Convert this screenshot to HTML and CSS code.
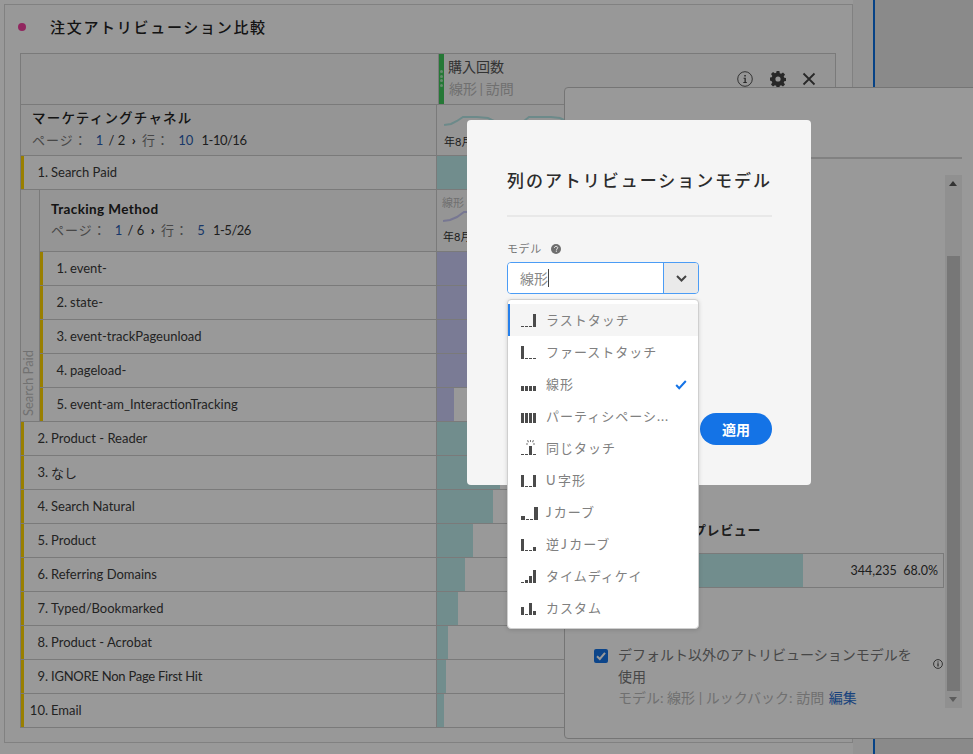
FILE: index.html
```html
<!DOCTYPE html>
<html lang="ja">
	<head>
		<title>注文アトリビューション比較</title>
		<meta charset="utf-8">
		<link rel="stylesheet" href="styles.css">
	</head>
	<body>
		<div class="page">
			<div class="panel">
				<div class="panel-title"><span class="dot"></span><h1>注文アトリビューション比較</h1></div>
				<div class="table">
					<div class="head-row">
						<div class="label-cell"></div>
						<div class="metric-head">
							<div class="grip"><i></i><i></i><i></i><i></i></div>
							<div class="metric-name">
								<div>購入回数</div>
								<div class="muted metric-sub">線形 | 訪問</div>
							</div>
							<div class="tools">
								<svg width="16" height="16" viewBox="0 0 16 16"><circle cx="8" cy="8" r="7.3" fill="none" stroke="#555" stroke-width="1"/><path d="M6.6 6.8h2.2v4.2h1v.9H6.3V11h1.2V7.7h-.9zM7.3 3.9h1.5v1.6H7.3z" fill="#444"/></svg>
								<svg width="16" height="16" viewBox="0 0 16 16"><path fill="#444" fill-rule="evenodd" d="M6.6 0h2.8l.4 2.2 1.3.6 1.9-1.3 2 2-1.3 1.9.6 1.3 2.2.4v2.8l-2.2.4-.6 1.3 1.3 1.9-2 2-1.9-1.3-1.3.6-.4 2.2H6.6l-.4-2.2-1.3-.6-1.9 1.3-2-2 1.3-1.9-.6-1.3L-.5 9.4V6.6l2.2-.4.6-1.3L1 3l2-2 1.9 1.3 1.3-.6zM8 5.4a2.6 2.6 0 1 0 0 5.2 2.6 2.6 0 0 0 0-5.2z"/></svg>
								<svg width="14" height="14" viewBox="0 0 14 14"><path d="M1.5 1.5l11 11M12.5 1.5l-11 11" stroke="#444" stroke-width="1.8" fill="none"/></svg>
							</div>
						</div>
					</div>

					<div class="dim-row">
						<div class="label-cell dim-label">
							<h2>マーケティングチャネル</h2>
							<div class="pager"><span class="muted">ページ：</span><b>1</b> / 2 <span class="chev">›</span> <span class="muted">行：</span><b>10</b> <span class="range">1-10/16</span></div>
						</div>
						<div class="spark-cell">
							<svg class="spark" width="125" height="16" viewBox="0 0 125 16"><path d="M0 9l7-1 6-3 6-4h14l11 1 8 4M80 5l5-4h22l9 1 8 4" fill="none" stroke="#b5e6e6" stroke-width="2"/></svg>
							<div class="spark-date">年8月</div>
						</div>
					</div>

					<div class="row gold">
						<div class="label-cell"><span class="num">1.</span>Search Paid</div>
						<div class="bar-cell"><div class="bar teal bar-full"></div></div>
					</div>

					<div class="nested">
						<div class="nested-side"><span>Search Paid</span></div>
						<div class="nested-main">
							<div class="dim-row nested-head">
								<div class="label-cell dim-label">
									<h2 class="latin">Tracking Method</h2>
									<div class="pager"><span class="muted">ページ：</span><b>1</b> / 6 <span class="chev">›</span> <span class="muted">行：</span><b>5</b> <span class="range">1-5/26</span></div>
								</div>
								<div class="spark-cell nested-spark">
									<div class="muted small">線形</div>
									<svg class="spark" width="125" height="12" viewBox="0 0 125 12"><path d="M0 10l7-1 7-3 7-5h10" fill="none" stroke="#c6c6f4" stroke-width="2"/></svg>
									<div class="spark-date">年8月</div>
								</div>
							</div>
							<div class="row gold"><div class="label-cell"><span class="num">1.</span>event-</div><div class="bar-cell"><div class="bar purple bar-full"></div></div></div>
							<div class="row gold"><div class="label-cell"><span class="num">2.</span>state-</div><div class="bar-cell"><div class="bar purple bar-full"></div></div></div>
							<div class="row gold"><div class="label-cell"><span class="num">3.</span>event-trackPageunload</div><div class="bar-cell"><div class="bar purple bar-full"></div></div></div>
							<div class="row gold"><div class="label-cell"><span class="num">4.</span>pageload-</div><div class="bar-cell"><div class="bar purple bar-full"></div></div></div>
							<div class="row gold"><div class="label-cell"><span class="num">5.</span>event-am_InteractionTracking</div><div class="bar-cell"><div class="bar purple" style="width:17px"></div></div></div>
						</div>
					</div>

					<div class="row gold"><div class="label-cell"><span class="num">2.</span>Product - Reader</div><div class="bar-cell"><div class="bar teal" style="width:100px"></div></div></div>
					<div class="row gold"><div class="label-cell"><span class="num">3.</span>なし</div><div class="bar-cell"><div class="bar teal" style="width:63px"></div></div></div>
					<div class="row gold"><div class="label-cell"><span class="num">4.</span>Search Natural</div><div class="bar-cell"><div class="bar teal" style="width:56px"></div></div></div>
					<div class="row gold"><div class="label-cell"><span class="num">5.</span>Product</div><div class="bar-cell"><div class="bar teal" style="width:36px"></div></div></div>
					<div class="row gold"><div class="label-cell"><span class="num">6.</span>Referring Domains</div><div class="bar-cell"><div class="bar teal" style="width:28px"></div></div></div>
					<div class="row gold"><div class="label-cell"><span class="num">7.</span>Typed/Bookmarked</div><div class="bar-cell"><div class="bar teal" style="width:21px"></div></div></div>
					<div class="row gold"><div class="label-cell"><span class="num">8.</span>Product - Acrobat</div><div class="bar-cell"><div class="bar teal" style="width:11px"></div></div></div>
					<div class="row gold"><div class="label-cell"><span class="num">9.</span><span class="tight">IGNORE Non Page First Hit</span></div><div class="bar-cell"><div class="bar teal" style="width:9px"></div></div></div>
					<div class="row gold"><div class="label-cell"><span class="num">10.</span>Email</div><div class="bar-cell"><div class="bar teal" style="width:7px"></div></div></div>
				</div>
			</div>
			<div class="gutter"></div>
			<div class="rail"></div>

			<div class="side-panel">
				<div class="side-rule"></div>
				<div class="scrollbar">
					<span class="arrow-up"></span>
					<span class="thumb"></span>
					<span class="arrow-down"></span>
				</div>
				<div class="side-body">
					<h3>プレビュー</h3>
					<div class="preview">
						<div class="preview-fill"></div>
						<div class="preview-val">344,235&nbsp; 68.0%</div>
					</div>
					<div class="check-row">
						<span class="checkbox"><svg width="10" height="10" viewBox="0 0 10 10"><path d="M1 5.2l2.8 2.8L9 1.8" fill="none" stroke="#fff" stroke-width="2"/></svg></span>
						<div class="check-text">
							<div>デフォルト以外のアトリビューションモデルを使用</div>
							<div class="meta">モデル: 線形 | ルックバック: 訪問 <a>編集</a></div>
						</div>
						<svg class="check-info" width="10" height="10" viewBox="0 0 10 10"><circle cx="5" cy="5" r="4.4" fill="none" stroke="#444" stroke-width=".9"/><path d="M4.4 4.2h1.2v3.2H4.4zM4.4 2.4h1.2v1.1H4.4z" fill="#444"/></svg>
					</div>
				</div>
			</div>

			<div class="dim"></div>

			<div class="modal">
				<h2 class="modal-title">列のアトリビューションモデル</h2>
				<div class="modal-rule"></div>
				<div class="field-label">モデル <svg width="10" height="10" viewBox="0 0 10 10"><circle cx="5" cy="5" r="5" fill="#6e6e6e"/><path d="M3.4 3.9C3.5 2.9 4.2 2.4 5.1 2.4c1 0 1.6.6 1.6 1.3 0 1.1-1.2 1.1-1.2 2.1" fill="none" stroke="#f5f5f5" stroke-width="1"/><rect x="4.8" y="6.6" width="1.1" height="1.1" fill="#f5f5f5"/></svg></div>
				<div class="combo">
					<div class="combo-input">線形<span class="caret"></span></div>
					<div class="combo-btn"><svg width="11" height="7" viewBox="0 0 11 7"><path d="M1 1l4.5 4.5L10 1" fill="none" stroke="#444" stroke-width="2"/></svg></div>
					<ul class="menu">
						<li class="active"><svg class="model" viewBox="0 0 15 14"><path d="M0 12h3v1H0zM4 12h3v1H4zM8 12h3v1H8zM12 0h3v13h-3z"/></svg>ラストタッチ</li>
						<li><svg class="model" viewBox="0 0 15 14"><path d="M0 0h3v13H0zM4 12h3v1H4zM8 12h3v1H8zM12 12h3v1h-3z"/></svg>ファーストタッチ</li>
						<li><svg class="model" viewBox="0 0 15 14"><path d="M0 8h3v5H0zM4 8h3v5H4zM8 8h3v5H8zM12 8h3v5h-3z"/></svg>線形<svg class="tick" width="12" height="10" viewBox="0 0 12 10"><path d="M1.2 5l3 3.2L10.8 1" fill="none" stroke="#1473e6" stroke-width="2"/></svg></li>
						<li><svg class="model" viewBox="0 0 15 14"><path d="M0 3h3v10H0zM4 3h3v10H4zM8 3h3v10H8zM12 3h3v10h-3z"/></svg>パーティシペーシ...</li>
						<li><svg class="model" viewBox="0 0 15 14"><path d="M0 12h3v1H0zM4 12h3v1H4zM8 4h3v9H8zM12 12h3v1h-3z"/><path d="M9 -2h1v2H9zM6 -1.500l1 -.5 1 2-1 .5zM13 -1.500l-1 -.5-1 2 1 .5zM5 1.500h2v1H5zM12 1.500h2v1h-2z" fill="#777"/></svg>同じタッチ</li>
						<li><svg class="model" viewBox="0 0 15 14"><path d="M0 1h3v12H0zM4 12h3v1H4zM8 12h3v1H8zM12 1h3v12h-3z"/></svg>U 字形</li>
						<li><svg class="model j" viewBox="0 0 17 14"><path d="M0 9h4v4H0zM5 12h3v1H5zM9 12h3v1H9zM13 0h4v13h-4z"/></svg>J カーブ</li>
						<li><svg class="model" viewBox="0 0 15 14"><path d="M0 1h3v12H0zM4 12h3v1H4zM8 12h3v1H8zM12 9h3v4h-3z"/></svg>逆 J カーブ</li>
						<li><svg class="model" viewBox="0 0 15 14"><path d="M0 12h3v1H0zM4 10h3v3H4zM8 6h3v7H8zM12 0h3v13h-3z"/></svg>タイムディケイ</li>
						<li><svg class="model" viewBox="0 0 15 14"><path d="M0 5h3v8H0zM4 12h3v1H4zM8 1h3v12H8zM12 9h3v4h-3z"/></svg>カスタム</li>
					</ul>
				</div>
				<div class="modal-foot"><button class="apply">適用</button></div>
			</div>
		</div>
	</body>
</html>
```
FILE: styles.css
```css
* {
	box-sizing: border-box;
}

body {
	margin: 0px;
	font-family: "Lato", "Noto Sans CJK JP", sans-serif;
	font-size: 14px;
	color: #333;
	background-color: #fff;
}

h1, h2, h3, ul {
	margin: 0;
	padding: 0;
}

.page {
	position: relative;
	width: 973px;
	height: 754px;
	overflow: hidden;
	display: flex;
	background-color: #fff;
	padding: 4px 0 11px 4px;
}

.muted {
	color: #bbb;
}

.small {
	font-size: 11px;
	line-height: 14px;
}

/* report panel */
.panel {
	width: 849px;
	flex: none;
	border: 1px solid #d8d8d8;
	background-color: #fdfdfd;
	padding: 0 16px 0 15px;
}

.panel-title {
	height: 48px;
	display: flex;
	align-items: center;
	padding-bottom: 6px;
}

.dot {
	width: 8px;
	height: 8px;
	margin: 2px 0 0 -2px;
	border-radius: 50%;
	background-color: #f2409f;
}

.panel-title h1 {
	margin-left: 24px;
	font-size: 15px;
	font-weight: 500;
	letter-spacing: 1.700px;
	color: #222;
}

.table {
	border: 1px solid #ccc;
	border-bottom: 0;
	width: 816px;
}

.head-row, .dim-row, .row {
	display: flex;
	border-bottom: 1px solid #ccc;
}

.label-cell {
	flex: none;
	width: 416px;
}

.head-row {
	height: 51px;
	background-color: #f8f8f8;
}

.metric-head {
	flex: 1;
	display: flex;
	position: relative;
	margin-left: 1px;
	border-left: 1px solid #ccc;
}

.grip {
	width: 5px;
	background-color: #3fc85a;
	display: flex;
	flex-direction: column;
	align-items: center;
	gap: 1.500px;
	padding-top: 16px;
}

.grip i {
	width: 3px;
	height: 3px;
	border-radius: 50%;
	background-color: #a8e8b4;
}

.metric-name {
	padding: 2px 0 0 4px;
	line-height: 22px;
	font-size: 14px;
	color: #555;
}

.metric-sub {
	padding-left: 1px;
	word-spacing: -1px;
	color: #bbb;
}

.tools {
	position: absolute;
	right: 19px;
	top: 17px;
	display: flex;
	align-items: center;
	gap: 16.500px;
}

.dim-row {
	height: 51px;
	background-color: #f8f8f8;
}

.dim-label {
	padding: 3px 0 0 11px;
	border-right: 1px solid #ccc;
}

.dim-label h2 {
	font-size: 13.500px;
	font-weight: 500;
	letter-spacing: 1.2px;
	line-height: 20px;
	color: #222;
}

.dim-label h2.latin {
	letter-spacing: .4px;
	font-weight: 700;
}

.pager {
	font-size: 13px;
	line-height: 22px;
	padding-top: 1px;
	white-space: nowrap;
}

.nested-head .pager {
	padding-top: 0;
}

.pager b {
	font-weight: 400;
	color: #2a5db0;
	margin: 0 2px 0 8px;
}

.pager .muted {
	letter-spacing: 1px;
	color: #777;
}

.chev {
	font-size: 14px;
	font-weight: 700;
	margin: 0 3px;
}

.range {
	margin-left: 3px;
	letter-spacing: -.5px;
}

.spark-cell {
	padding: 11px 0 0 7px;
	font-size: 11px;
}

.spark {
	display: block;
}

.spark-date {
	margin-top: 2px;
	line-height: 16px;
	color: #333;
}

.row {
	height: 34px;
	background-color: #fff;
}

.row .label-cell {
	display: flex;
	align-items: center;
	border-left: 3px solid #ffd400;
	border-right: 1px solid #ccc;
	font-size: 13px;
	padding-bottom: 1px;
	color: #3a3a3a;
}

.num {
	width: 24px;
	margin-right: 3px;
	text-align: right;
}

.tight {
	letter-spacing: -.25px;
}

.bar-cell {
	flex: 1;
	min-width: 0;
}

.bar {
	height: 100%;
}

.bar-full {
	width: 100%;
}

.teal {
	background-color: #bcecec;
}

.purple {
	background-color: #cccdf8;
}

/* breakdown inside row 1 */
.nested {
	display: flex;
	border-bottom: 2px solid #ccc;
	margin-bottom: -1px;
}

.nested-side {
	width: 19px;
	flex: none;
	background-color: #f8f8f8;
	border-right: 1px solid #ccc;
	display: flex;
	align-items: flex-end;
	justify-content: center;
	padding: 0 4px 5px 0;
}

.nested-side span {
	writing-mode: vertical-rl;
	transform: rotate(180deg);
	font-size: 13px;
	color: #bdbdbd;
	line-height: 16px;
}

.nested-main {
	flex: 1;
	min-width: 0;
}

.nested-main .row:last-child {
	border-bottom: 0;
	height: 33px;
}

.nested-head {
	height: 62px;
}

.nested-head .dim-label {
	width: 397px;
	padding: 9px 0 0 11px;
}

.nested-main .row .label-cell {
	width: 397px;
}

.nested-spark {
	padding: 6px 0 0 6px;
}

.nested-spark .small {
	margin-left: -1px;
}

.nested-spark .spark {
	margin-top: 1px;
}

.nested-spark .spark-date {
	margin-top: 6px;
}

/* strip and chart to the right */
.gutter {
	flex: none;
	margin-top: -4px;
	margin-bottom: -11px;
	border-right: 2px solid #0a6fe0;
	width: 22px;
	background-color: #f6f6f6;
}

.rail {
	flex: 1;
	margin: -4px 0 -11px;
	background-color: #e6e6e6;
}

.side-panel {
	position: absolute;
	left: 564px;
	top: 87px;
	right: -4px;
	height: 652px;
	background-color: #fff;
	border: 1px solid #c4c4c4;
	border-top-left-radius: 4px;
	border-bottom-left-radius: 4px;
}

.side-rule {
	position: absolute;
	left: 0;
	top: 69px;
	width: 397px;
	height: 2px;
	background-color: #d8d8d8;
}

.scrollbar {
	position: absolute;
	left: 380px;
	top: 87px;
	width: 17px;
	height: 533px;
	background-color: #f0f0f0;
}

.thumb {
	position: absolute;
	left: 2px;
	top: 81px;
	width: 13px;
	height: 435px;
	background-color: #c6c6c6;
}

.arrow-up, .arrow-down {
	position: absolute;
	left: 4px;
	border-left: 4px solid transparent;
	border-right: 4px solid transparent;
}

.arrow-up {
	top: 6px;
	border-bottom: 5px solid #555;
}

.arrow-down {
	bottom: 6px;
	border-top: 5px solid #999;
}

.side-body {
	position: absolute;
	left: 15px;
	top: 434px;
	width: 364px;
}

.side-body h3 {
	display: flex;
	justify-content: flex-end;
	white-space: nowrap;
	height: 19px;
	font-size: 13px;
	font-weight: 700;
	letter-spacing: .6px;
	line-height: 16px;
	color: #333;
	padding-right: 183px;
}

.preview {
	position: relative;
	margin-top: 12px;
	height: 35px;
	border: 1px solid #ccc;
	background-color: #fff;
}

.preview-fill {
	width: 222px;
	height: 100%;
	background-color: #bcecec;
}

.preview-val {
	position: absolute;
	right: 5px;
	top: 8px;
	font-size: 12.500px;
	line-height: 17px;
}

.check-row {
	display: flex;
	margin-top: 56px;
	padding-left: 14px;
	position: relative;
}

.checkbox {
	flex: none;
	width: 14px;
	height: 14px;
	margin-top: 5px;
	border-radius: 2px;
	background-color: #1473e6;
	display: flex;
	align-items: center;
	justify-content: center;
}

.check-text {
	margin-left: 10px;
	width: 300px;
	font-size: 14px;
	line-height: 22px;
	color: #777;
}

.meta {
	line-height: 20px;
	color: #bbb;
}

.meta a {
	color: #2a6fd0;
	margin-left: 1px;
}

.check-info {
	flex: none;
	margin: 15px 0 0 15px;
}

.dim {
	position: absolute;
	inset: 0;
	background-color: rgba(0, 0, 0, .4);
}

/* model dialog */
.modal {
	position: absolute;
	left: 467px;
	top: 120px;
	width: 344px;
	height: 365px;
	border-radius: 4px;
	background-color: #f5f5f5;
	padding: 48px 39px 0 40px;
}

.modal-title {
	font-size: 17px;
	font-weight: 500;
	letter-spacing: 1.950px;
	line-height: 26px;
	color: #2c2c2c;
}

.modal-rule {
	height: 2px;
	margin-top: 21px;
	background-color: #e8e8e8;
}

.field-label {
	margin-top: 23px;
	display: flex;
	align-items: center;
	gap: 9px;
	font-size: 11px;
	line-height: 18px;
	color: #777;
	letter-spacing: .6px;
}

.combo {
	position: relative;
	display: flex;
	width: 192px;
	height: 32px;
	margin-top: 4px;
	border: 1px solid #4b9cf5;
	border-radius: 4px;
	overflow: visible;
}

.combo-input {
	flex: 1;
	display: flex;
	align-items: center;
	padding-left: 12px;
	font-size: 14px;
	color: #888;
	background-color: #fff;
	border-radius: 3px 0 0 3px;
}

.caret {
	width: 1px;
	height: 18px;
	background-color: #444;
}

.combo-btn {
	width: 35px;
	display: flex;
	align-items: center;
	justify-content: center;
	border-left: 1px solid #4b9cf5;
	background-color: #eaeaea;
	border-radius: 0 3px 3px 0;
}

.menu {
	position: absolute;
	left: -1px;
	top: 36px;
	width: 192px;
	height: 330px;
	padding: 4px 0;
	list-style: none;
	background-color: #fff;
	border: 1px solid #cfcfcf;
	border-radius: 4px;
	box-shadow: 0 1px 4px rgba(0, 0, 0, .15);
	z-index: 2;
}

.menu li {
	position: relative;
	height: 32px;
	display: flex;
	align-items: center;
	padding: 0 0 2px 38px;
	font-size: 13px;
	letter-spacing: 1px;
	word-spacing: -3px;
	color: #808080;
	white-space: nowrap;
}

.menu li.active {
	background-color: #f5f5f5;
	box-shadow: inset 2px 0 0 #2680eb;
}

.model {
	position: absolute;
	left: 13px;
	top: 10px;
	width: 15px;
	height: 14px;
	fill: #4b4b4b;
	overflow: visible;
}

.model.j {
	width: 17px;
	top: 11px;
}

.tick {
	position: absolute;
	left: 167px;
	top: 12px;
}

.modal-foot {
	position: absolute;
	left: 233px;
	top: 293px;
}

.apply {
	width: 72px;
	height: 32px;
	border: 0;
	border-radius: 16px;
	background-color: #1473e6;
	color: #fff;
	font-family: inherit;
	font-size: 14px;
	font-weight: 700;
}
```
